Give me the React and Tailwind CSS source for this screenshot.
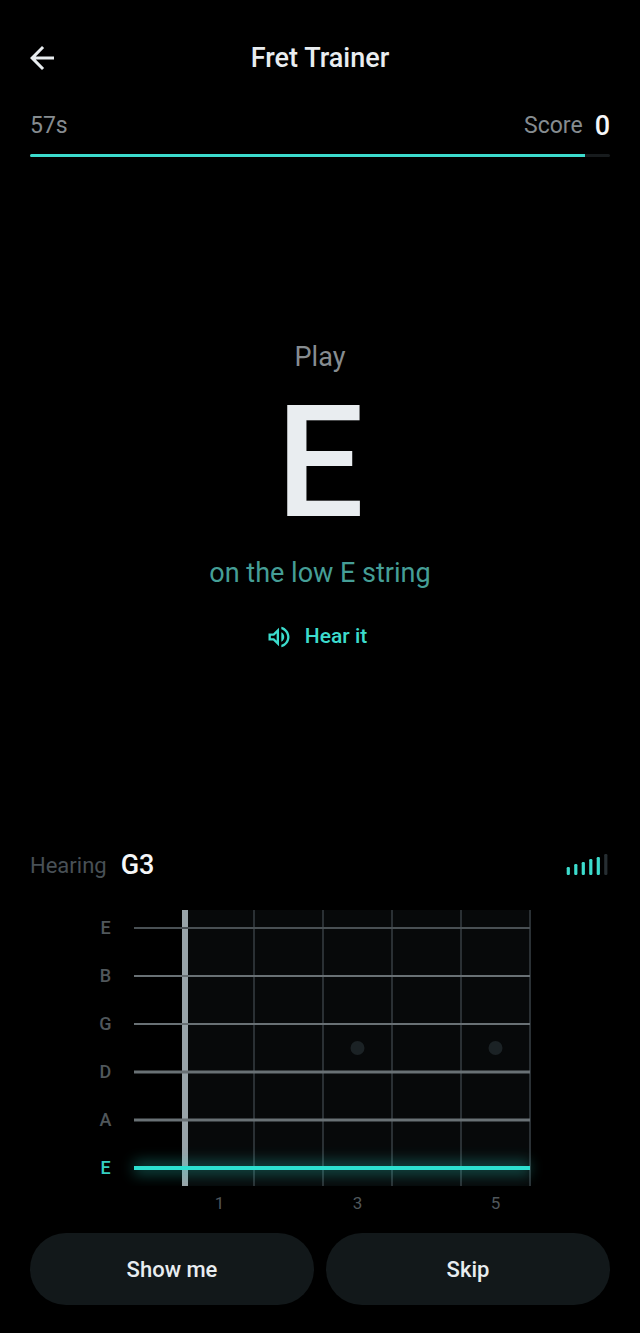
import React, { useState } from "react";
import { MdArrowBack, MdOutlineVolumeUp } from "react-icons/md";

/* ---------------- DATA ---------------- */
const ROUND_LENGTH = 60;

// thinnest string first, as drawn on the board
const STRINGS = [
  { name: "E", width: 2, color: "#495054" },
  { name: "B", width: 2, color: "#697175" },
  { name: "G", width: 2, color: "#697175" },
  { name: "D", width: 3, color: "#697175" },
  { name: "A", width: 3, color: "#697175" },
  { name: "E", width: 4, color: "#2de0d0" },
];
const TARGET_STRING = 5;

const FRETS = [158, 227, 296, 365, 434];
const MARKERS = [3, 5];
const LABELLED_FRETS = [1, 3, 5];
const LEVELS = [8, 11, 13, 16, 18, 21];

const stringY = i => 19 + i * 48;
const fretCenter = n => 123.5 + (n - 1) * 69;

/* ---------------- SIGNAL LEVEL ---------------- */
function LevelMeter({ level }) {
  return (
    <svg width="46" height="24" viewBox="0 0 46 24" role="img" aria-label="Input level">
      {LEVELS.map((h, i) => (
        <rect
          key={h}
          x={2.7 + i * 7.5}
          y={22 - h}
          width="3.2"
          height={h}
          rx="1.2"
          fill={i < level ? "#3cdccd" : "#262e32"}
        />
      ))}
    </svg>
  );
}

/* ---------------- FRETBOARD ---------------- */
function Fretboard() {
  return (
    <svg
      viewBox="0 0 448 312"
      className="mx-auto mt-7 block w-full max-w-[448px] overflow-visible"
      role="img"
      aria-label="Fretboard, frets one to five"
    >
      <defs>
        <filter id="glow" filterUnits="userSpaceOnUse" x="0" y="220" width="460" height="80">
          <feGaussianBlur stdDeviation="7" />
        </filter>
        <clipPath id="glowClip">
          <rect x="0" y="220" width="460" height="57" />
        </clipPath>
      </defs>

      <rect x="89" y="1" width="345" height="276" fill="#07090a" />
      {FRETS.map(x => (
        <rect key={x} x={x - 1} y="1" width="2" height="276" fill="#2a3034" />
      ))}
      <rect x="86" y="1" width="6" height="276" fill="#98a3a8" />

      {MARKERS.map(n => (
        <circle key={n} cx={fretCenter(n)} cy="139" r="7" fill="#1b2225" />
      ))}

      <g clipPath="url(#glowClip)">
        <rect
          x="38"
          y={stringY(TARGET_STRING) - 7}
          width="396"
          height="14"
          fill="#2de0d0"
          opacity="0.3"
          filter="url(#glow)"
        />
      </g>

      {STRINGS.map((s, i) => (
        <g key={i}>
          <rect x="38" y={stringY(i) - s.width / 2} width="396" height={s.width} fill={s.color} />
          <text
            x="9.5"
            y={stringY(i) + 6}
            textAnchor="middle"
            fontSize="18"
            fontWeight="500"
            fill={i === TARGET_STRING ? "#35cfc1" : "#50575b"}
          >
            {s.name}
          </text>
        </g>
      ))}

      {LABELLED_FRETS.map(n => (
        <text key={n} x={fretCenter(n)} y="300" textAnchor="middle" fontSize="17" fill="#50575b">
          {n}
        </text>
      ))}
    </svg>
  );
}

/* ---------------- SCREEN ---------------- */
export default function App() {
  const [timeLeft] = useState(57.4);
  const [score] = useState(0);

  return (
    <div className="flex min-h-screen flex-col bg-black px-[30px] pt-6 pb-7 font-['Roboto',sans-serif] text-[#e9edf0]">

      {/* HEADER */}
      <header className="grid h-17 grid-cols-[36px_1fr_36px] items-center">
        <button aria-label="Back" className="-ml-1.5 size-9">
          <MdArrowBack className="size-9" />
        </button>
        <h1 className="text-center text-[27px] leading-9 font-medium">Fret Trainer</h1>
      </header>

      {/* TIMER + SCORE */}
      <div className="mt-4 flex h-9 items-center justify-between text-[23px] text-[#868c90]">
        <span>{Math.floor(timeLeft)}s</span>
        <span className="flex items-center gap-3">
          Score
          <strong className="text-[27px] font-medium text-[#f5f7f8]">{score}</strong>
        </span>
      </div>
      <div
        role="progressbar"
        aria-label="Time left"
        aria-valuenow={Math.floor(timeLeft)}
        aria-valuemax={ROUND_LENGTH}
        className="mt-2.5 h-[3px] overflow-hidden rounded-full bg-[#171b1d]"
      >
        <div className="h-full bg-[#3cdccd]" style={{ width: `${(timeLeft / ROUND_LENGTH) * 100}%` }} />
      </div>

      {/* PROMPT */}
      <main className="flex flex-1 flex-col items-center justify-center pb-1">
        <p className="text-[27px] leading-8 text-[#868c90]">Play</p>
        <p className="mt-3 text-[156px] leading-none font-medium">E</p>
        <p className="mt-4 text-[27px] leading-8 text-[#459e96]">on the low E string</p>
        <button className="mt-6 flex h-12 items-center gap-3 pr-5 pl-3 text-[21px] font-medium text-[#3cdccd]">
          <MdOutlineVolumeUp className="size-7" />
          Hear it
        </button>
      </main>

      {/* DETECTED NOTE */}
      <div className="flex h-8 items-center justify-between">
        <div className="flex items-center gap-3.5">
          <span className="text-[22px] text-[#485056]">Hearing</span>
          <span className="text-[27px] font-medium text-[#f5f7f8]">G3</span>
        </div>
        <LevelMeter level={5} />
      </div>

      <Fretboard />

      {/* ACTIONS */}
      <div className="mt-3 grid grid-cols-2 gap-3">
        <button className="h-18 rounded-full bg-[#12181a] text-[22px] font-medium">Show me</button>
        <button className="h-18 rounded-full bg-[#12181a] text-[22px] font-medium">Skip</button>
      </div>
    </div>
  );
}
